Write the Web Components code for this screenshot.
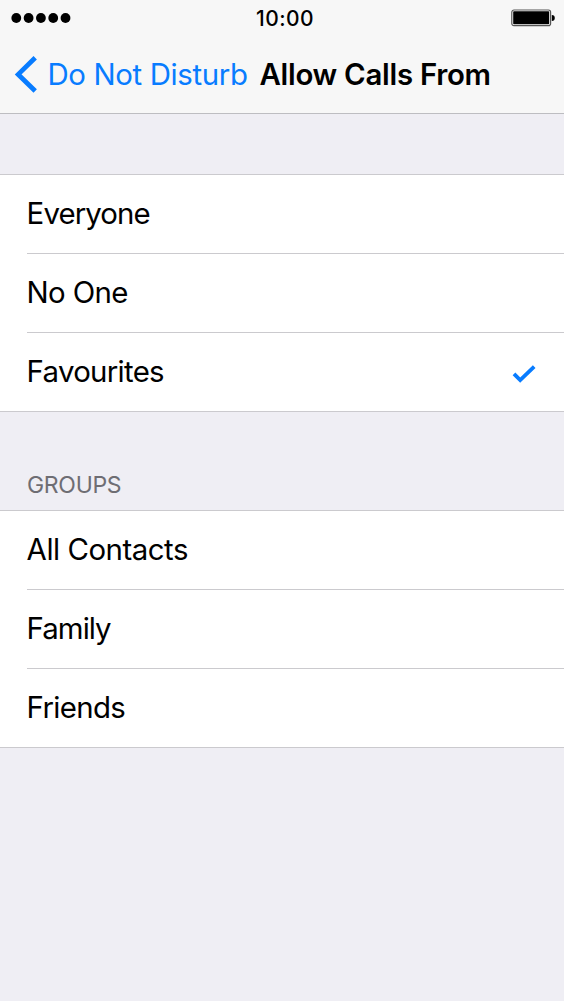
<!DOCTYPE html>
<html lang="en">
<head>
<meta charset="utf-8">
<title>Allow Calls From</title>
<style>
html, body { margin: 0; background: #efeef4; }
body { font-family: Inter, "Liberation Sans", sans-serif; color: #000; }
</style>
</head>
<body>
<settings-screen>
  <status-bar slot="top">10:00</status-bar>
  <nav-bar slot="top"><span slot="back">Do Not Disturb</span>Allow Calls From</nav-bar>
  <option-group style="--head:60px">
    <option-row style="--ls:-.9px">Everyone</option-row>
    <option-row style="--ls:-.65px">No One</option-row>
    <option-row style="--ls:-.7px" checked>Favourites</option-row>
  </option-group>
  <option-group style="--head:98px"><span slot="heading">GROUPS</span>
    <option-row style="--ls:-.48px">All Contacts</option-row>
    <option-row style="--ls:-.95px">Family</option-row>
    <option-row style="--ls:-.65px">Friends</option-row>
  </option-group>
</settings-screen>
<script>
function define(name, html) {
  customElements.define(name, class extends HTMLElement {
    constructor() {
      super();
      this.attachShadow({ mode: 'open' }).innerHTML = html;
    }
  });
}

define('settings-screen', `
  <style>
    :host { display: flex; flex-direction: column; width: 564px; height: 1001px; overflow: hidden; background: #efeef4; }
    header { height: 113px; background: #f7f7f7; border-bottom: 1px solid #bdbdc1; flex: none; }
  </style>
  <header><slot name="top"></slot></header>
  <slot></slot>`);

define('status-bar', `
  <style>
    :host { display: grid; grid-template-columns: 1fr auto 1fr; align-items: center; height: 36px; padding: 0 9px 0 11px; }
    .time { font-size: 21px; line-height: 34px; padding-top: 2px; font-weight: 500; letter-spacing: .4px; padding-left: 4px; }
    svg { display: block; }
    .battery { justify-self: end; }
  </style>
  <svg width="62" height="12" viewBox="0 0 62 12">
    <circle cx="5.3" cy="6" r="4.9"/><circle cx="17.6" cy="6" r="4.9"/><circle cx="29.9" cy="6" r="4.9"/><circle cx="42.2" cy="6" r="4.9"/><circle cx="54.5" cy="6" r="4.9"/>
  </svg>
  <span class="time"><slot></slot></span>
  <svg class="battery" width="44" height="18" viewBox="0 0 44 18">
    <rect x=".8" y="1" width="38.8" height="15.6" rx="2.2" fill="#fff" stroke="#555" stroke-width="1.2"/>
    <rect x="2.2" y="2.3" width="36" height="13" rx=".8"/>
    <path d="M40.8 5.9a3 3 0 0 1 0 6z"/>
  </svg>`);

define('nav-bar', `
  <style>
    :host { display: flex; align-items: center; height: 75px; padding: 0 0 2px 14px; font-size: 29.4px; line-height: 36px; white-space: nowrap; }
    svg { flex: none; }
    span { padding-top: 2px; }
    .back { color: #087cff; width: 199px; margin-left: 8.5px; letter-spacing: -.36px; }
    .title { font-weight: 600; margin-left: 13px; letter-spacing: -.28px; }
  </style>
  <svg width="25" height="40" viewBox="0 0 25 40"><path d="M21.2 3.7 4.2 20.4l17 16.6" fill="none" stroke="#087cff" stroke-width="4.8"/></svg>
  <span class="back"><slot name="back"></slot></span>
  <span class="title"><slot></slot></span>`);

define('option-group', `
  <style>
    :host { display: block; }
    .head { height: var(--head); box-sizing: border-box; display: flex; align-items: flex-end; padding: 0 27px 11px; font-size: 23px; line-height: 28px; letter-spacing: -.3px; color: #6e6d73; }
    .rows { --line: #cbcace; background: #fff; border-top: 1px solid #cbcace; border-bottom: 1px solid #cbcace; }
    ::slotted(option-row:last-of-type) { --line: transparent; --lw: 0px; }
  </style>
  <div class="head"><slot name="heading"></slot></div>
  <div class="rows"><slot></slot></div>`);

define('option-row', `
  <style>
    :host { display: block; padding-left: 27px; }
    .row { display: flex; align-items: center; justify-content: space-between; height: 76px; padding: 0 28px 2px 0; border-bottom: var(--lw, 1px) solid var(--line); font-size: 29.4px; line-height: 36px; letter-spacing: var(--ls); }
    .row > span { padding-top: 2px; margin-left: -.4px; }
    svg { display: none; margin-top: 5px; }
    :host([checked]) svg { display: block; }
  </style>
  <div class="row"><span><slot></slot></span>
    <svg width="24" height="20" viewBox="0 0 24 20"><path d="m2 9.8 6.2 6.3L22.2 2.6" fill="none" stroke="#087cff" stroke-width="3.8"/></svg>
  </div>`);
</script>
</body>
</html>
